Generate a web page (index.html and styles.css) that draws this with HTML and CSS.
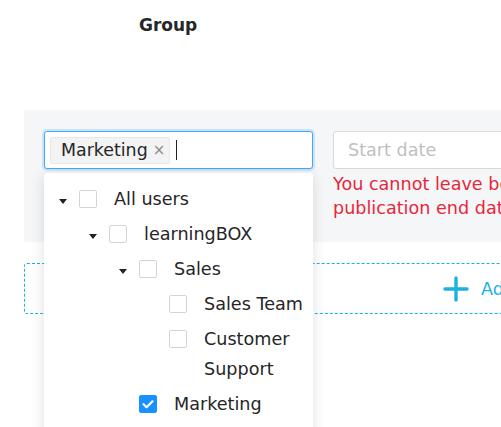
FILE: index.html
```html
<!DOCTYPE html>
<html>
<head>
<meta charset="utf-8">
<link rel="stylesheet" href="styles.css">
</head>
<body>
<div class="page">
  <div class="header"><span class="title">Group</span></div>
  <div class="band">
    <div class="field">
      <div class="select">
        <span class="tag">Marketing<span class="tag-x">×</span></span>
        <span class="caret"></span>
      </div>
      <div class="dropdown">
        <div class="node l0"><span class="sw"><i class="tri"></i></span><span class="cb"></span><span class="lbl">All users</span></div>
        <div class="node l1"><span class="sw"><i class="tri"></i></span><span class="cb"></span><span class="lbl">learningBOX</span></div>
        <div class="node l2"><span class="sw"><i class="tri"></i></span><span class="cb"></span><span class="lbl">Sales</span></div>
        <div class="node l3"><span class="sw"></span><span class="cb"></span><span class="lbl">Sales Team</span></div>
        <div class="node l3"><span class="sw"></span><span class="cb"></span><span class="lbl">Customer Support</span></div>
        <div class="node l2"><span class="sw"></span><span class="cb on"><svg viewBox="0 0 18 18" width="18" height="18"><path d="M4.5 9.2 L7.6 12.2 L13.5 6.3" fill="none" stroke="#fff" stroke-width="2.2" stroke-linecap="round" stroke-linejoin="round"/></svg></span><span class="lbl">Marketing</span></div>
      </div>
    </div>
    <div class="datecol">
      <div class="date">Start date</div>
      <div class="err">You cannot leave both publication start date and<br>publication end date blank</div>
    </div>
  </div>
  <div class="addbox">
    <span class="plus"><svg viewBox="0 0 26 26" width="26" height="26"><path d="M13 2 V24 M2 13 H24" stroke="#1ab3e0" stroke-width="3.4" stroke-linecap="round"/></svg></span>
    <span class="addtext">Add group</span>
  </div>
</div>
</body>
</html>
```
FILE: styles.css
```css
html, body {
  margin: 0;
  padding: 0;
  background: #fff;
  overflow: hidden;
}
body {
  font-family: "DejaVu Sans", Verdana, sans-serif;
  color: #262626;
  width: 501px;
  height: 427px;
}
.page {
  width: 900px;
  position: relative;
}
.header {
  height: 110px;
  padding-left: 139px;
  box-sizing: border-box;
  padding-top: 14px;
}
.title {
  font-weight: bold;
  font-size: 17px;
  line-height: 22px;
  color: #262626;
}
.band {
  margin-left: 24px;
  height: 132px;
  background: #f5f6f8;
  box-sizing: border-box;
  padding: 21px 0 0 20px;
  display: flex;
  gap: 20px;
}
.field {
  position: relative;
  width: 269px;
}
.select {
  box-sizing: border-box;
  height: 38px;
  border: 1px solid #40a9ff;
  border-radius: 3px;
  background: #fff;
  box-shadow: 0 0 0 2px rgba(24, 144, 255, 0.18);
  display: flex;
  align-items: center;
  padding-left: 5px;
}
.tag {
  box-sizing: border-box;
  height: 27px;
  width: 120px;
  background: #f3f3f3;
  border: 1px solid #e8e8e8;
  border-radius: 2px;
  font-size: 17.4px;
  line-height: 25px;
  padding-left: 10px;
  color: #262626;
  display: flex;
  align-items: center;
}
.tag-x {
  color: #8c8c8c;
  font-size: 15px;
  margin-left: 5px;
}
.caret {
  width: 1px;
  height: 20px;
  background: #222;
  margin-left: 6px;
}
.dropdown {
  position: absolute;
  left: 0;
  top: 42px;
  width: 269px;
  height: 300px;
  background: #fff;
  box-shadow: 0 3px 14px rgba(0, 0, 0, 0.13);
  border-radius: 3px;
  box-sizing: border-box;
  padding-top: 8px;
  z-index: 5;
}
.node {
  display: flex;
  align-items: flex-start;
  padding: 2.5px 6px 2.5px 0;
  font-size: 17.6px;
  line-height: 30px;
}
.l0 { padding-left: 11px; }
.l1 { padding-left: 41px; }
.l2 { padding-left: 71px; }
.l3 { padding-left: 101px; }
.sw {
  width: 16px;
  height: 30px;
  flex: none;
  display: flex;
  align-items: center;
  justify-content: center;
  margin-right: 8px;
}
.tri {
  display: block;
  width: 0;
  height: 0;
  border-left: 4px solid transparent;
  border-right: 4px solid transparent;
  border-top: 5px solid #222;
  margin-top: 6px;
}
.cb {
  flex: none;
  box-sizing: border-box;
  width: 18px;
  height: 18px;
  border: 1px solid #d4d4d4;
  border-radius: 2px;
  background: #fff;
  margin-top: 6px;
  margin-right: 17px;
}
.cb.on {
  background: #1890ff;
  border-color: #1890ff;
}
.cb.on svg {
  display: block;
  margin: -1px;
}
.lbl {
  flex: 1;
}
.datecol {
  display: flex;
  flex-direction: column;
}
.date {
  box-sizing: border-box;
  width: 300px;
  height: 38px;
  border: 1px solid #d9d9d9;
  border-radius: 3px;
  background: #fff;
  color: #bfbfbf;
  font-size: 17.6px;
  line-height: 36px;
  padding-left: 14px;
}
.err {
  color: #e5283b;
  font-size: 17.6px;
  line-height: 24px;
  margin-top: 3px;
  white-space: nowrap;
}
.addbox {
  margin-left: 24px;
  margin-top: 21px;
  height: 51px;
  box-sizing: border-box;
  border: 1px dashed #1ab3e0;
  border-radius: 3px;
  display: flex;
  align-items: center;
  padding-left: 418px;
}
.plus {
  display: flex;
  margin-right: 12px;
}
.addtext {
  color: #1ab3e0;
  font-size: 17.6px;
}
```
